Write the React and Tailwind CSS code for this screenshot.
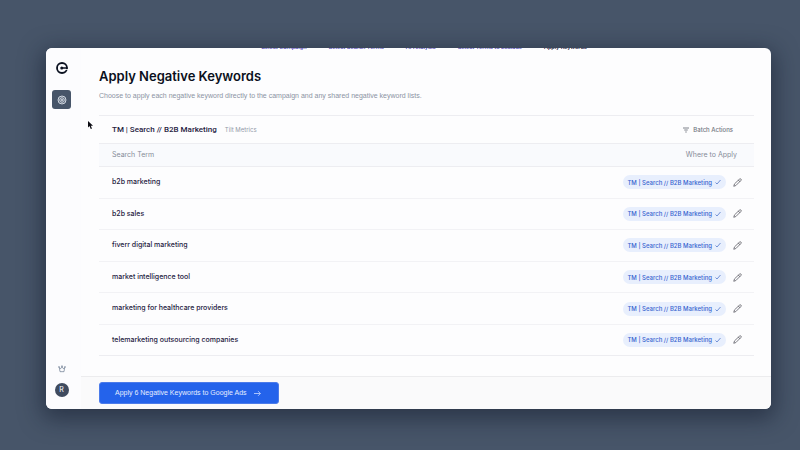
import React from "react";

const steps = [
  "Select Campaign",
  "Select Search Terms",
  "AI Analysis",
  "Select Terms to Exclude",
  "Apply Keywords",
];

const terms = [
  "b2b marketing",
  "b2b sales",
  "fiverr digital marketing",
  "market intelligence tool",
  "marketing for healthcare providers",
  "telemarketing outsourcing companies",
];

function Logo() {
  return (
    <svg viewBox="0 0 24 24" className="size-3" fill="none" aria-hidden="true">
      <circle cx="12" cy="12" r="10" stroke="#0b1120" strokeWidth="3.6" />
      <path d="M23 12H12" stroke="#0b1120" strokeWidth="3.4" />
      <circle cx="11.5" cy="12" r="3" fill="#0b1120" />
      <path d="M18 15h6" stroke="#fcfcfe" strokeWidth="1.6" />
    </svg>
  );
}

function Target() {
  return (
    <svg viewBox="0 0 24 24" className="size-[10px]" fill="none" stroke="#e2e8f0" strokeWidth="2.2" aria-hidden="true">
      <circle cx="12" cy="12" r="9.5" />
      <circle cx="12" cy="12" r="5.5" />
      <circle cx="12" cy="12" r="2" />
    </svg>
  );
}

function Crown() {
  return (
    <svg viewBox="0 0 24 24" className="size-2" fill="none" stroke="#64748b" strokeWidth="2" strokeLinejoin="round" aria-hidden="true">
      <path d="M4 8l4 3 4-6 4 6 4-3-2 12H6z" />
      <circle cx="3" cy="6" r="1.4" />
      <circle cx="12" cy="3.5" r="1.4" />
      <circle cx="21" cy="6" r="1.4" />
    </svg>
  );
}

function Pencil() {
  return (
    <svg viewBox="0 0 24 24" className="size-[9px]" fill="none" stroke="#52525b" strokeWidth="2" strokeLinecap="round" strokeLinejoin="round" aria-hidden="true">
      <path d="M17.5 2.8a2.600 2.600 0 0 1 3.700 3.700L7.500 20.200 2 22l1.800-5.500z" />
      <path d="M14.500 5.800l3.700 3.700" />
    </svg>
  );
}

export default function App() {
  return (
    <div className="flex min-h-screen bg-[#475569] pt-12 pr-[29px] pb-[41px] pl-[46px] font-['Inter','Liberation_Sans',sans-serif] text-[#25213f]">
      <div className="flex flex-1 overflow-hidden rounded-md bg-[#fdfdfe] shadow-[0_6px_22px_4px_rgba(15,23,42,0.5)]">
        <aside className="flex w-[35px] shrink-0 flex-col items-center bg-[#fcfcfe] pt-3.5 pr-1 pb-3">
          <a href="#home" aria-label="Home">
            <Logo />
          </a>
          <a href="#campaigns" aria-label="Campaigns" className="mt-4 flex size-[19px] items-center justify-center rounded-[3px] bg-[#475569]">
            <Target />
          </a>
          <a href="#upgrade" aria-label="Upgrade" className="mt-auto">
            <Crown />
          </a>
          <button aria-label="Account" className="mt-2.5 size-3.5 rounded-full bg-[#3f4b5f] text-[7px] leading-[14px] text-white">
            R
          </button>
        </aside>

        <main className="flex min-w-0 flex-1 flex-col">
          <nav aria-label="Steps" className="-mt-[5px] flex h-2 justify-center gap-[22px] pr-1 font-['Roboto',sans-serif] text-[6px] leading-2 font-medium whitespace-nowrap text-[#4f46b5]">
            {steps.map((step) => (
              <a key={step} href="#step" className="last:text-[#25213f]">
                {step}
              </a>
            ))}
          </nav>

          <header className="px-[18px] pt-[15px]">
            <h1 className="text-[13px] leading-5 font-semibold text-[#0b1020]">Apply Negative Keywords</h1>
            <p className="mt-1 font-['Liberation_Sans',sans-serif] text-[7px] leading-3 text-[#8b93a3]">
              Choose to apply each negative keyword directly to the campaign and any shared negative keyword lists.
            </p>
          </header>

          <section className="mt-[13px] mr-[17px] ml-[18px] border-y border-[#ededf1]">
            <div className="flex h-[27px] items-center pr-[21px] pl-[13px]">
              <h2 className="font-['Roboto',sans-serif] text-[8px] font-medium">TM | Search // B2B Marketing</h2>
              <span className="ml-2 text-[6px] text-[#9299a8]">Tilt Metrics</span>
              <button className="ml-auto flex items-center gap-1 text-[6px] font-medium text-[#71757f]">
                <svg viewBox="0 0 12 12" className="size-[6px]" stroke="#71757f" strokeWidth="1.800" fill="none" aria-hidden="true">
                  <path d="M0 2h12M2.500 6h7M4.500 10h3" />
                </svg>
                Batch Actions
              </button>
            </div>
            <table className="h-[212px] w-full">
              <thead>
                <tr className="h-[23px] border-y border-[#ededf1] bg-[#f9fafd] text-[7px] text-[#868c99]">
                  <th className="pl-[13px] text-left font-normal">Search Term</th>
                  <th className="pr-[17px] text-right font-normal">Where to Apply</th>
                </tr>
              </thead>
              <tbody>
                {terms.map((term) => (
                  <tr key={term} className="border-b border-[#f2f2f5] last:border-b-0">
                    <td className="pl-[13px] text-[7px] font-medium">{term}</td>
                    <td className="pr-3">
                      <div className="flex items-center justify-end gap-[7px]">
                        <span className="flex h-3.5 items-center gap-[3px] rounded-full bg-[#e8effd] pr-[5px] pl-1 text-[6px] font-medium text-[#3563cf]">
                          TM | Search // B2B Marketing
                          <svg viewBox="0 0 12 12" className="size-[6px]" fill="none" stroke="#4a72c8" strokeWidth="1.500" aria-hidden="true">
                            <path d="M1 7l3 3 7-8" />
                          </svg>
                        </span>
                        <button aria-label={`Edit ${term}`}>
                          <Pencil />
                        </button>
                      </div>
                    </td>
                  </tr>
                ))}
              </tbody>
            </table>
          </section>

          <footer className="mt-auto border-t border-[#ececee] bg-[#fafafb] px-[18px] pt-[5px] pb-[5px]">
            <button className="flex h-[22px] w-[180px] items-center gap-[7px] rounded-[3px] border border-[#4b7bea] bg-[#2463eb] pl-[15px] font-['Liberation_Sans',sans-serif] text-[7px] whitespace-nowrap text-[#e5edff]">
              Apply 6 Negative Keywords to Google Ads
              <svg viewBox="0 0 12 12" className="size-[7px]" fill="none" stroke="#c5d6ff" strokeWidth="1.400" aria-hidden="true">
                <path d="M0 6h11M7 2l4 4-4 4" />
              </svg>
            </button>
          </footer>
        </main>
      </div>

      <svg viewBox="0 0 10 16" className="absolute top-[121px] left-[88px] h-2 w-[5px]" aria-hidden="true">
        <path d="M0 0v13l3-3 2.500 6 2.500-1-2.500-5.500H10z" fill="#0b0b12" />
      </svg>
    </div>
  );
}
